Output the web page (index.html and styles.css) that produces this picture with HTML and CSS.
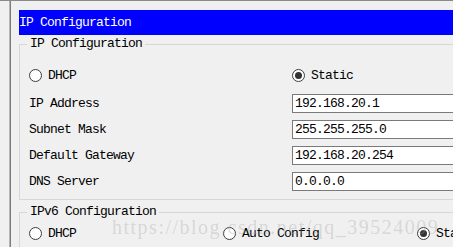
FILE: index.html
```html
<!DOCTYPE html>
<html>
<head>
<meta charset="utf-8">
<link rel="stylesheet" href="styles.css">
</head>
<body>
<div class="window">
  <div class="panel">
    <div class="titlebar">IP Configuration</div>
    <fieldset class="group group-v4">
      <legend>IP Configuration</legend>
      <div class="mode-row">
        <label class="radio"><span class="dot"></span>DHCP</label>
        <label class="radio"><span class="dot checked"></span>Static</label>
      </div>
      <div class="form">
        <span class="label">IP Address</span><div class="field">192.168.20.1</div>
        <span class="label">Subnet Mask</span><div class="field">255.255.255.0</div>
        <span class="label">Default Gateway</span><div class="field">192.168.20.254</div>
        <span class="label">DNS Server</span><div class="field">0.0.0.0</div>
      </div>
    </fieldset>
    <fieldset class="group group-v6">
      <legend>IPv6 Configuration</legend>
      <div class="mode-row v6">
        <label class="radio"><span class="dot"></span>DHCP</label>
        <label class="radio"><span class="dot"></span>Auto Config</label>
        <label class="radio"><span class="dot checked"></span>Static</label>
      </div>
    </fieldset>
  </div>
  <div class="watermark">https://blog.csdn.net/qq_39524009</div>
</div>
</body>
</html>
```
FILE: styles.css
```css
html, body {
  margin: 0;
  padding: 0;
  background: #f0f0f0;
  overflow: hidden;
  width: 453px;
  height: 247px;
}
.window {
  position: relative;
  height: 247px;
  overflow: hidden;
  border-top: 1px solid #8a8a8a;
  box-sizing: border-box;
  font-family: "Liberation Mono", "Courier New", monospace;
  font-size: 13px;
  letter-spacing: -0.8px;
  color: #000;
}
.panel {
  margin-left: 9px;
  border-left: 1px solid #b4b4b4;
  box-shadow: inset 1px 0 0 #7c7c7c;
  padding: 9px 0 0 9px;
  width: 600px;
  height: 260px;
  box-sizing: border-box;
}
.titlebar {
  background: #0000ff;
  color: #fff;
  height: 25px;
  line-height: 25px;
}
.group {
  margin: 0;
  border: 1px solid #d7d7d7;
  padding: 0 0 0 9px;
  width: 560px;
  box-sizing: border-box;
  font-family: inherit;
}
.group-v4 {
  margin-top: 2px;
  padding-bottom: 8px;
}
.group-v6 {
  margin-top: 5px;
}
legend {
  padding: 0 3px;
  margin-left: -2px;
  line-height: 14px;
}
.mode-row {
  display: grid;
  grid-template-columns: 263px auto;
  height: 30px;
  align-items: center;
  margin-top: 9px;
  margin-bottom: 4px;
}
.mode-row.v6 {
  grid-template-columns: 194px 194px auto;
  margin-top: 4px;
  height: 20px;
}
.radio {
  display: flex;
  align-items: center;
  gap: 6px;
  white-space: nowrap;
}
.dot {
  width: 11px;
  height: 11px;
  border: 1px solid #3c3c3c;
  border-radius: 50%;
  background: #fff;
  display: inline-flex;
  align-items: center;
  justify-content: center;
  flex: none;
}
.dot.checked::after {
  content: "";
  width: 7px;
  height: 7px;
  border-radius: 50%;
  background: #333;
}
.form {
  display: grid;
  grid-template-columns: 263px 200px;
  row-gap: 7px;
  align-items: center;
}
.field {
  height: 19px;
  line-height: 17px;
  border: 1px solid #7a7a7a;
  background: #fff;
  padding-left: 2px;
  box-sizing: border-box;
  width: 200px;
}
.watermark {
  position: absolute;
  left: 112px;
  top: 216px;
  font-family: "Liberation Serif", serif;
  font-size: 20px;
  letter-spacing: 1.5px;
  line-height: 20px;
  color: rgba(160, 160, 160, 0.33);
  white-space: nowrap;
  pointer-events: none;
}
```
